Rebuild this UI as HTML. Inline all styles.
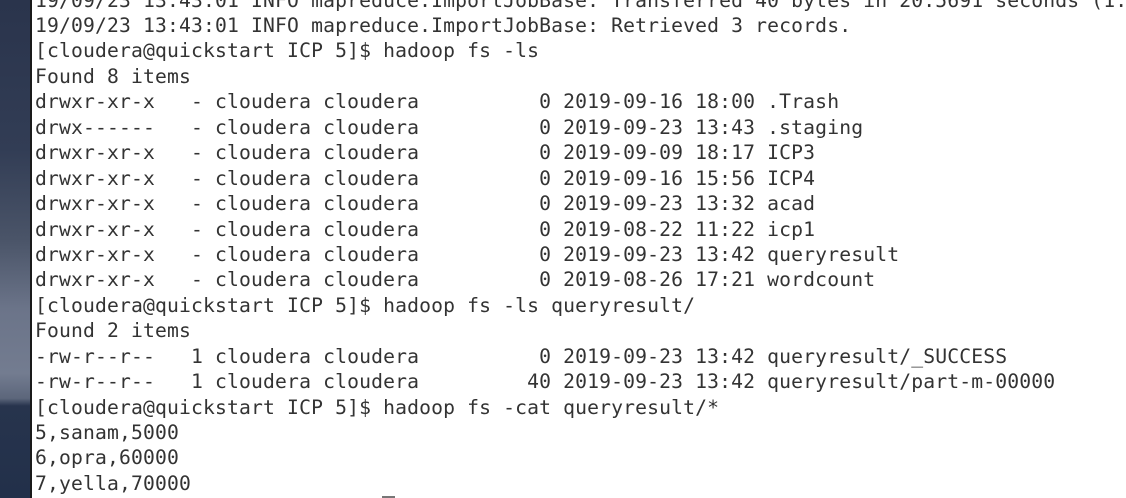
<!DOCTYPE html>
<html><head><meta charset="utf-8"><style>
html,body{margin:0;padding:0;width:1126px;height:498px;overflow:hidden;background:#fff}
#strip{position:absolute;left:0;top:0;width:30px;height:498px;
background:linear-gradient(to bottom,#2a344c 0%,#323d55 30%,#4a5468 48%,#6b7489 62%,#737c90 75%,#5c667b 80%,#27344d 81.5%,#22304a 100%)}
#border{position:absolute;left:30px;top:0;width:2px;height:498px;background:#1a1a1a}
.l{position:absolute;left:35px;height:25px;line-height:25px;margin:0;font-family:"DejaVu Sans Mono",monospace;font-size:19.7px;letter-spacing:0.15px;color:#333;white-space:pre}
#cur{position:absolute;left:382px;top:496px;width:13px;height:2px;background:#777}
</style></head><body>
<div id="strip"></div><div id="border"></div>
<div class="l" style="top:-12.5px">19/09/23 13:43:01 INFO mapreduce.ImportJobBase: Transferred 40 bytes in 20.5691 seconds (1.</div>
<div class="l" style="top:12.9px">19/09/23 13:43:01 INFO mapreduce.ImportJobBase: Retrieved 3 records.</div>
<div class="l" style="top:38.4px">[cloudera@quickstart ICP 5]$ hadoop fs -ls</div>
<div class="l" style="top:63.8px">Found 8 items</div>
<div class="l" style="top:89.3px">drwxr-xr-x   - cloudera cloudera          0 2019-09-16 18:00 .Trash</div>
<div class="l" style="top:114.7px">drwx------   - cloudera cloudera          0 2019-09-23 13:43 .staging</div>
<div class="l" style="top:140.1px">drwxr-xr-x   - cloudera cloudera          0 2019-09-09 18:17 ICP3</div>
<div class="l" style="top:165.6px">drwxr-xr-x   - cloudera cloudera          0 2019-09-16 15:56 ICP4</div>
<div class="l" style="top:191.0px">drwxr-xr-x   - cloudera cloudera          0 2019-09-23 13:32 acad</div>
<div class="l" style="top:216.5px">drwxr-xr-x   - cloudera cloudera          0 2019-08-22 11:22 icp1</div>
<div class="l" style="top:241.9px">drwxr-xr-x   - cloudera cloudera          0 2019-09-23 13:42 queryresult</div>
<div class="l" style="top:267.3px">drwxr-xr-x   - cloudera cloudera          0 2019-08-26 17:21 wordcount</div>
<div class="l" style="top:292.8px">[cloudera@quickstart ICP 5]$ hadoop fs -ls queryresult/</div>
<div class="l" style="top:318.2px">Found 2 items</div>
<div class="l" style="top:343.7px">-rw-r--r--   1 cloudera cloudera          0 2019-09-23 13:42 queryresult/_SUCCESS</div>
<div class="l" style="top:369.1px">-rw-r--r--   1 cloudera cloudera         40 2019-09-23 13:42 queryresult/part-m-00000</div>
<div class="l" style="top:394.5px">[cloudera@quickstart ICP 5]$ hadoop fs -cat queryresult/*</div>
<div class="l" style="top:420.0px">5,sanam,5000</div>
<div class="l" style="top:445.4px">6,opra,60000</div>
<div class="l" style="top:470.9px">7,yella,70000</div>
<div id="cur"></div>
</body></html>
